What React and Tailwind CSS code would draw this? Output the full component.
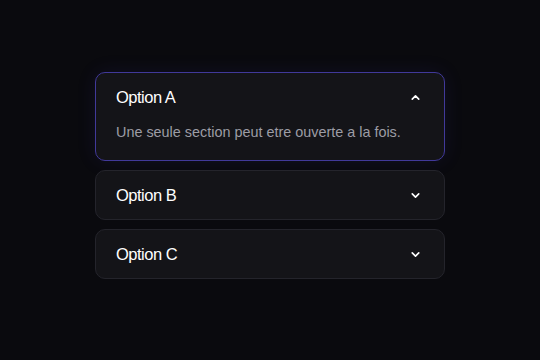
import { useState } from "react";

const items = [
  { id: "a", title: "Option A", body: "Une seule section peut etre ouverte a la fois." },
  { id: "b", title: "Option B", body: "Contenu de la section B." },
  { id: "c", title: "Option C", body: "Contenu de la section C." },
];

function Chevron({ up }) {
  return (
    <svg
      width="13"
      height="13"
      viewBox="0 0 24 24"
      fill="none"
      stroke="currentColor"
      strokeWidth="3"
      strokeLinecap="round"
      strokeLinejoin="round"
      className={up ? "rotate-180" : ""}
    >
      <path d="m6 9 6 6 6-6" />
    </svg>
  );
}

export default function App() {
  const [open, setOpen] = useState("a");

  return (
    <div className="min-h-screen bg-[#0a0a0e] pt-[72px] font-['Liberation_Sans',Arial,sans-serif]">
      <div className="mx-auto flex w-[350px] flex-col gap-[9px]">
        {items.map((item) => {
          const isOpen = open === item.id;
          return (
            <div
              key={item.id}
              className={`rounded-[10px] border bg-[#141418] ${
                isOpen
                  ? "border-[#41399a] shadow-[0_0_20px_rgba(79,70,229,0.1)]"
                  : "border-[#24242b]"
              }`}
            >
              <button
                onClick={() => setOpen(isOpen ? "" : item.id)}
                className="flex h-12 w-full items-center justify-between pl-5 pr-[22px] pt-px text-left text-[16.5px] tracking-[-0.5px] text-white"
              >
                <span>{item.title}</span>
                <Chevron up={isOpen} />
              </button>
              {isOpen && (
                <p className="px-5 pb-[18px] pt-px text-[14.4px] leading-5 text-[#9d9da5]">
                  {item.body}
                </p>
              )}
            </div>
          );
        })}
      </div>
    </div>
  );
}
